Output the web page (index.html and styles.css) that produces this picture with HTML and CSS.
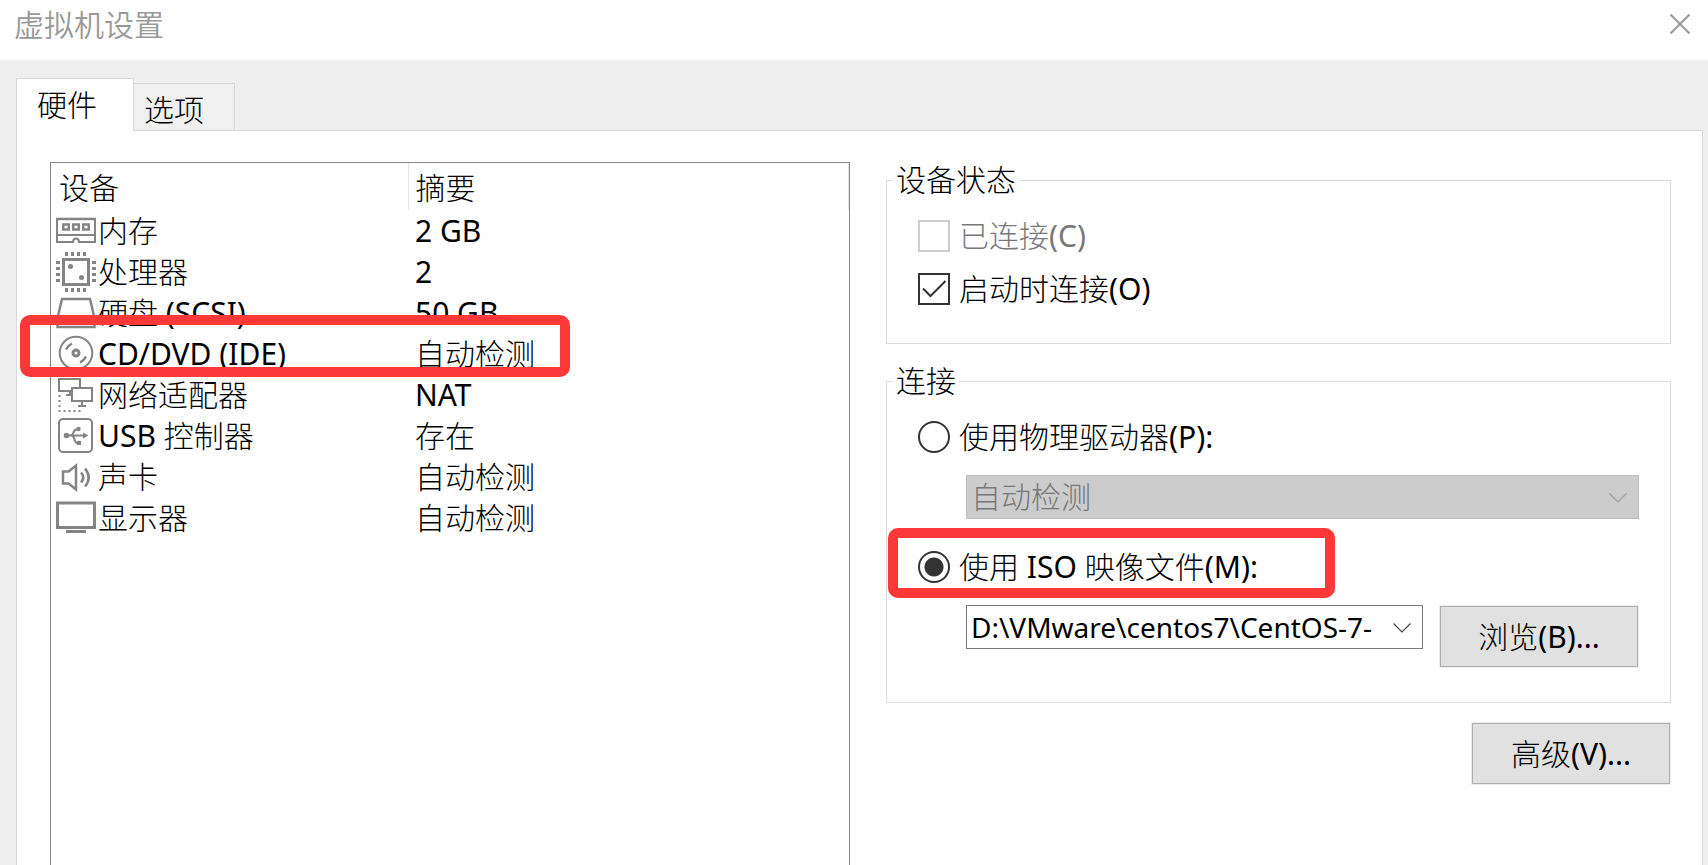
FILE: index.html
```html
<!DOCTYPE html>
<html lang="zh-CN">
<head>
<meta charset="utf-8">
<title>虚拟机设置</title>
<link rel="stylesheet" href="styles.css">
</head>
<body>
<header class="titlebar">
  <h1 class="title">虚拟机设置</h1>
  <button class="close" type="button" aria-label="关闭">
    <svg width="20" height="20" viewBox="0 0 20 20"><path d="M.5.5l19 19M19.5.5l-19 19" fill="none" stroke="#999" stroke-width="2"/></svg>
  </button>
</header>
<main class="dialog">
  <div class="tabs" role="tablist">
    <button class="tab tab-active" type="button" role="tab" aria-selected="true">硬件</button>
    <button class="tab" type="button" role="tab" aria-selected="false">选项</button>
  </div>
  <div class="panel">
    <section class="list">
      <table class="devices">
        <thead>
          <tr><th scope="col">设备</th><th scope="col">摘要</th></tr>
        </thead>
        <tbody>
          <tr>
            <td><div class="device"><svg class="icon" viewBox="0 0 40 40"><g fill="none" stroke="#848484" stroke-width="2"><path d="M1 8V31h16q0-3.500 3-3.500t3 3.500h16V8M0 24h40"/><path d="M0 8h40" stroke-width="2.500"/><path d="M7.200 13.500h5.600v5H7.200zM17.200 13.500h5.600v5h-5.600zM27.200 13.500h5.600v5h-5.600z" stroke-width="2.500"/></g></svg>内存</div></td>
            <td>2 GB</td>
          </tr>
          <tr>
            <td><div class="device"><svg class="icon" viewBox="0 0 40 40"><g fill="none" stroke="#848484"><path d="M7.500 7.500h25v25h-25z" stroke-width="3"/><path d="M9 2h22M9 38h22" stroke-width="4" stroke-dasharray="3"/><path d="M2 9v22M38 9v22" stroke-width="4" stroke-dasharray="3"/></g><g fill="#848484"><circle cx="14.500" cy="14.500" r="2.500"/><circle cx="25.500" cy="25.500" r="2.500"/></g></svg>处理器</div></td>
            <td>2</td>
          </tr>
          <tr>
            <td><div class="device"><svg class="icon" viewBox="0 0 40 40"><path d="M1.500 25L6 6h28l4.500 19v9h-37zM1 25h38" fill="none" stroke="#848484" stroke-width="2.500"/></svg>硬盘 (SCSI)</div></td>
            <td>50 GB</td>
          </tr>
          <tr>
            <td><div class="device"><svg class="icon" viewBox="0 0 40 40"><g fill="none" stroke="#848484" stroke-width="2"><circle cx="20" cy="19" r="16.300"/><circle cx="20" cy="19" r="3" stroke-width="3"/><path d="M10 15.500q2-4 6-6M30 22.500q-2 4-6 6" stroke-width="2.500"/></g></svg>CD/DVD (IDE)</div><span class="mark mark-device"></span></td>
            <td>自动检测</td>
          </tr>
          <tr>
            <td><div class="device"><svg class="icon" viewBox="0 0 40 40"><g fill="none" stroke="#848484" stroke-width="2"><path d="M15 16H3V4h21v8M10 20h5M14 16v4"/><path d="M16 13h20v13H16zM26 26v4M22 31h8"/><path d="M3.500 20v16H26" stroke-dasharray="2 3"/></g></svg>网络适配器</div></td>
            <td>NAT</td>
          </tr>
          <tr>
            <td><div class="device"><svg class="icon" viewBox="0 0 40 40"><g fill="none" stroke="#848484" stroke-width="2"><rect x="3" y="3" width="33" height="33" rx="4"/><path d="M10 19.500h20M14 19.500q2.500 0 3.500-3t4-3.500M15 19.500q2.500 0 3.500 4t4 4"/></g><g fill="#848484"><circle cx="10.500" cy="19.500" r="2.800"/><circle cx="22.500" cy="13" r="2.200"/><path d="M21 25h4v4h-4zM27 16.500l5.500 3-5.500 3z"/></g></svg>USB 控制器</div></td>
            <td>存在</td>
          </tr>
          <tr>
            <td><div class="device"><svg class="icon" viewBox="0 0 40 40"><g fill="none" stroke="#848484" stroke-width="2.500"><path d="M7 14.500h5.500L20 8.500v24l-7.500-6H7z"/><path d="M25 15.500q4.500 5 0 10M29 11.500q7.500 9 0 18"/></g></svg>声卡</div></td>
            <td>自动检测</td>
          </tr>
          <tr>
            <td><div class="device"><svg class="icon" viewBox="0 0 40 40"><g fill="none" stroke="#848484" stroke-width="3"><path d="M1.500 5h37v24.500h-37z"/><path d="M10 33.500h20"/></g></svg>显示器</div></td>
            <td>自动检测</td>
          </tr>
        </tbody>
      </table>
    </section>
    <section class="settings">
      <fieldset class="group group-status">
        <legend>设备状态</legend>
        <label class="choice choice-disabled"><input class="box" type="checkbox" disabled>已连接(C)</label>
        <label class="choice"><input class="box" type="checkbox" checked>启动时连接(O)
          <svg class="tick" viewBox="0 0 32 32"><path d="M5 15.500l7.500 7.500L27.500 8" fill="none" stroke="#333" stroke-width="2"/></svg>
        </label>
      </fieldset>
      <fieldset class="group group-connection">
        <legend>连接</legend>
        <label class="choice"><input class="radio" type="radio" name="source">使用物理驱动器(P):</label>
        <div class="field">
          <div class="combo">
            <select class="select" aria-label="物理驱动器" disabled><option>自动检测</option></select>
            <svg class="chevron" viewBox="0 0 18 10"><path d="M.5.5L9 9 17.500.5" fill="none" stroke="#a0a0a0" stroke-width="1.200"/></svg>
          </div>
        </div>
        <label class="choice choice-iso"><input class="radio" type="radio" name="source" checked>使用 ISO 映像文件(M):<span class="mark mark-iso"></span></label>
        <div class="field">
          <div class="combo">
            <select class="select select-path" aria-label="ISO 映像文件"><option>D:\VMware\centos7\CentOS-7-</option></select>
            <svg class="chevron" viewBox="0 0 18 10"><path d="M.5.5L9 9 17.500.5" fill="none" stroke="#444" stroke-width="1.200"/></svg>
          </div>
          <button class="button" type="button">浏览(B)...</button>
        </div>
      </fieldset>
      <button class="button button-advanced" type="button">高级(V)...</button>
    </section>
  </div>
</main>
</body>
</html>
```
FILE: styles.css
```css
* { box-sizing: border-box; }

body {
  margin: 0;
  min-height: 100vh;
  display: flex;
  flex-direction: column;
  background: #efefef;
  color: #000;
  font-family: "Noto Sans", "Noto Sans CJK SC Light", "Noto Sans CJK SC", sans-serif;
  font-size: 30px;
  line-height: 36px;
}

button, select { font: inherit; color: inherit; }

.titlebar {
  display: flex;
  align-items: center;
  justify-content: space-between;
  height: 60px;
  padding: 0 16px 12px 14px;
  background: #fff;
}
.title {
  margin: 0;
  padding-bottom: 2px;
  font-family: "Noto Sans CJK SC DemiLight", "Noto Sans CJK SC", sans-serif;
  font-size: 30px;
  font-weight: 400;
  color: #999;
}
.close { display: flex; padding: 2px; border: 0; background: none; }

.dialog {
  flex: 1;
  display: flex;
  flex-direction: column;
  padding: 18px 5px 0 16px;
}
.tabs { display: flex; align-items: flex-end; height: 52px; }
.tab {
  height: 47px;
  padding: 6px 30px 0 10px;
  border: 1px solid #d9d9d9;
  border-left: 0;
  border-bottom: 0;
  background: #f0f0f0;
}
.tab-active {
  position: relative;
  height: 53px;
  margin-bottom: -1px;
  padding: 0 36px 0 20px;
  border-left: 1px solid #d9d9d9;
  background: #fff;
}
.panel {
  flex: 1;
  display: grid;
  grid-template-columns: 800fr 785fr;
  gap: 36px;
  padding: 31px 31px 0 33px;
  border: 1px solid #d9d9d9;
  border-bottom: 0;
  background: #fff;
}

.list { border: 1px solid #828790; border-bottom: 0; }
.devices { width: 100%; border-collapse: collapse; table-layout: fixed; }
.devices th {
  height: 47px;
  padding: 2px 0 0 8px;
  border-right: 1px solid #e5e5e5;
  font-weight: 400;
  text-align: left;
}
.devices th:first-child { width: 357px; }
.devices th:last-child { padding-left: 7px; }
.devices td { position: relative; height: 41px; padding: 0 0 0 7px; }
.devices td:first-child { padding-left: 5px; }
.device { display: flex; align-items: center; gap: 2px; white-space: nowrap; }
.icon { width: 40px; height: 40px; flex: none; }

.mark {
  position: absolute;
  z-index: 1;
  border: 10px solid #fd3838;
  border-radius: 10px;
  pointer-events: none;
}
.mark-device { left: -31px; top: -18px; width: 550px; height: 62px; }
.mark-iso { left: -30px; top: -23px; width: 447px; height: 70px; }

.settings { display: flex; flex-direction: column; gap: 19px; min-width: 0; }
.group {
  display: flex;
  flex-direction: column;
  min-width: 0;
  margin: 0;
  border: 1px solid #dcdcdc;
}
.group legend { margin-left: -25px; padding: 0 3px; }
.group-status { gap: 21px; padding: 22px 31px 38px; }
.group-connection { gap: 22px; padding: 22px 31px 34px; }
.choice { position: relative; display: flex; align-items: center; gap: 9px; height: 32px; }
.choice-disabled { color: #787878; }
.choice-iso { margin-top: 10px; }
.box, .radio {
  appearance: none;
  flex: none;
  width: 32px;
  height: 32px;
  margin: 0;
  border: 2px solid #333;
  background: #fff;
}
.box:disabled { border-color: #ccc; }
.radio { border-radius: 50%; }
.radio:checked { background: radial-gradient(circle, #333 9px, #fff 10px); }
.tick { position: absolute; left: 0; top: 0; width: 32px; height: 32px; }

.field { display: flex; align-items: flex-start; gap: 16px; padding-left: 48px; }
.combo { position: relative; flex: 1; min-width: 0; }
.select {
  appearance: none;
  display: block;
  width: 100%;
  height: 44px;
  padding: 0 40px 0 4px;
  border: 1px solid #7a7a7a;
  border-radius: 0;
  background: #fff;
}
.select-path { font-size: 28px; }
.select:disabled { border-color: #bfbfbf; background: #ccc; color: #787878; opacity: 1; }
.chevron { position: absolute; right: 12px; top: 18px; width: 18px; height: 10px; pointer-events: none; }
.button {
  flex: none;
  width: 198px;
  height: 61px;
  margin: 1px;
  border: 1px solid #adadad;
  border-radius: 0;
  background: #e1e1e1;
  box-shadow: 0 0 0 1px #eee;
}
.button-advanced { align-self: flex-end; }
```
